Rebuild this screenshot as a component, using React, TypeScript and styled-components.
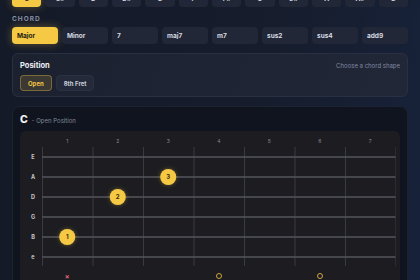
import React from "react";
import styled, { createGlobalStyle } from "styled-components";

const Global = createGlobalStyle`
  html, body { margin: 0; padding: 0; background: #151b29; }
  body { font-family: "Inter", "Noto Sans", sans-serif; overflow: hidden; }
  * { box-sizing: border-box; }
`;

const Page = styled.div`
  width: 420px;
  height: 280px;
  overflow: hidden;
  padding: 0 12px;
  background: linear-gradient(100deg, #141a28 0%, #161c2b 55%, #17223a 100%);
`;

const ButtonRow = styled.div<{ $cols: number; $top?: number }>`
  display: grid;
  grid-template-columns: repeat(${(p) => p.$cols}, 1fr);
  gap: 4px;
  margin-top: ${(p) => p.$top ?? 0}px;
`;

const ChoiceButton = styled.button<{ $active?: boolean; $align?: string }>`
  height: 17px;
  border: none;
  border-radius: 4px;
  padding: 0 5px;
  text-align: ${(p) => p.$align ?? "left"};
  font-family: "Inter", sans-serif;
  font-size: 6.5px;
  font-weight: 700;
  color: ${(p) => (p.$active ? "#1c1a12" : "#d5d9e2")};
  background: ${(p) => (p.$active ? "#f6c945" : "#212736")};
  box-shadow: ${(p) => (p.$active ? "0 0 8px rgba(246,201,69,0.35)" : "none")};
`;

const SectionLabel = styled.div`
  margin-top: 8px;
  margin-bottom: 4px;
  font-size: 6.5px;
  line-height: 8px;
  font-weight: 700;
  letter-spacing: 1px;
  color: #8790a3;
`;

const Panel = styled.div`
  margin-top: 9px;
  border: 1px solid #283042;
  border-radius: 6px;
  padding: 7px 7px 5px;
  background: linear-gradient(110deg, #1c2130 0%, #212737 100%);
`;

const PanelHead = styled.div`
  display: flex;
  justify-content: space-between;
  align-items: center;
  height: 8px;
`;

const PanelTitle = styled.span`
  font-size: 7.5px;
  font-weight: 700;
  color: #eef0f4;
`;

const PanelHint = styled.span`
  font-size: 6px;
  color: #8089a0;
`;

const PosRow = styled.div`
  display: flex;
  gap: 4px;
  margin-top: 6px;
`;

const PosButton = styled.button<{ $active?: boolean }>`
  height: 16px;
  padding: 0 7px;
  border-radius: 4px;
  font-family: "Inter", sans-serif;
  font-size: 6px;
  font-weight: 700;
  border: 1px solid ${(p) => (p.$active ? "rgba(246,201,69,0.35)" : "#2a3142")};
  background: ${(p) => (p.$active ? "rgba(246,201,69,0.14)" : "#242a39")};
  color: ${(p) => (p.$active ? "#f3c645" : "#c9ced9")};
`;

const Card = styled.div`
  margin-top: 9px;
  border: 1px solid #1c2231;
  border-radius: 8px;
  padding: 7px 7px 0;
  background: #10141e;
  height: 200px;
`;

const CardHead = styled.div`
  display: flex;
  align-items: baseline;
  gap: 4px;
  height: 12px;
  line-height: 12px;
`;

const ChordName = styled.span`
  font-size: 10.5px;
  font-weight: 800;
  color: #f3f4f7;
`;

const ChordSub = styled.span`
  font-size: 6px;
  color: #7f889b;
`;

const Fretboard = styled.div`
  margin-top: 5px;
  border-radius: 6px;
  background: #1d1d21;
  padding-left: 4px;
  height: 160px;
`;

const FretNumbers = styled.div`
  display: grid;
  grid-template-columns: 18px repeat(7, 50.5px);
  align-items: center;
  height: 16px;
  padding-top: 4px;
`;

const FretNum = styled.span`
  text-align: center;
  font-size: 5px;
  color: #8a8a92;
`;

const Body = styled.div`
  display: flex;
`;

const StringLabels = styled.div`
  display: flex;
  flex-direction: column;
  width: 18px;
`;

const StringLabel = styled.span`
  height: 20px;
  display: flex;
  align-items: center;
  justify-content: center;
  font-size: 5.5px;
  font-weight: 700;
  color: #c9c9cf;
`;

const Markers = styled.div`
  display: grid;
  grid-template-columns: 18px repeat(6, 50.5px);
  align-items: center;
  height: 18px;
`;

const Marker = styled.span`
  display: flex;
  justify-content: center;
  align-items: center;
`;

const Muted = styled.span`
  font-size: 7px;
  line-height: 7px;
  font-weight: 700;
  color: #e2677a;
`;

const Open = styled.span`
  width: 6px;
  height: 6px;
  border-radius: 50%;
  border: 1px solid #cfa53c;
`;

const roots = ["C", "C#", "D", "D#", "E", "F", "F#", "G", "G#", "A", "A#", "B"];
const chords = ["Major", "Minor", "7", "maj7", "m7", "sus2", "sus4", "add9"];
const strings = ["E", "A", "D", "G", "B", "e"];
const FW = 50.5;
const dots = [
  { fret: 3, s: 1, n: 3 },
  { fret: 2, s: 2, n: 2 },
  { fret: 1, s: 4, n: 1 },
];
const marks: ("x" | "o" | "")[] = ["x", "", "", "o", "", "o"];

function Board() {
  const w = FW * 7;
  return (
    <svg width={354} height={119} viewBox="0 0 354 119">
      <defs>
        <filter id="glow" x="-50%" y="-50%" width="200%" height="200%">
          <feGaussianBlur stdDeviation="2" result="b" />
          <feMerge>
            <feMergeNode in="b" />
            <feMergeNode in="SourceGraphic" />
          </feMerge>
        </filter>
      </defs>
      {Array.from({ length: 8 }).map((_, i) => (
        <line key={"f" + i} x1={i * FW + 0.5} x2={i * FW + 0.5} y1={0} y2={119} stroke="#3a3a41" strokeWidth={1} />
      ))}
      {strings.map((_, i) => (
        <line key={"s" + i} x1={0} x2={w} y1={10 + i * 20} y2={10 + i * 20} stroke="#55555c" strokeWidth={1.5} />
      ))}
      {dots.map((d) => {
        const cx = (d.fret - 0.5) * FW;
        const cy = 10 + d.s * 20;
        return (
          <g key={d.n}>
            <circle cx={cx} cy={cy} r={8} fill="#f6c945" opacity={0.35} filter="url(#glow)" />
            <circle cx={cx} cy={cy} r={8} fill="#f6c945" />
            <text x={cx} y={cy + 2} textAnchor="middle" fontSize="6" fontWeight="700" fill="#3a2f0e" fontFamily="Inter, sans-serif">
              {d.n}
            </text>
          </g>
        );
      })}
    </svg>
  );
}

export default function App() {
  return (
    <>
      <Global />
      <Page>
        <ButtonRow $cols={12} $top={-10}>
          {roots.map((r, i) => (
            <ChoiceButton key={r} $active={i === 0} $align="center">
              {r}
            </ChoiceButton>
          ))}
        </ButtonRow>
        <SectionLabel>CHORD</SectionLabel>
        <ButtonRow $cols={8}>
          {chords.map((c, i) => (
            <ChoiceButton key={c} $active={i === 0}>
              {c}
            </ChoiceButton>
          ))}
        </ButtonRow>
        <Panel>
          <PanelHead>
            <PanelTitle>Position</PanelTitle>
            <PanelHint>Choose a chord shape</PanelHint>
          </PanelHead>
          <PosRow>
            <PosButton $active>Open</PosButton>
            <PosButton>8th Fret</PosButton>
          </PosRow>
        </Panel>
        <Card>
          <CardHead>
            <ChordName>C</ChordName>
            <ChordSub>- Open Position</ChordSub>
          </CardHead>
          <Fretboard>
            <FretNumbers>
              <span />
              {[1, 2, 3, 4, 5, 6, 7].map((n) => (
                <FretNum key={n}>{n}</FretNum>
              ))}
            </FretNumbers>
            <Body>
              <StringLabels>
                {strings.map((s) => (
                  <StringLabel key={s}>{s}</StringLabel>
                ))}
              </StringLabels>
              <Board />
            </Body>
            <Markers>
              <span />
              {marks.map((m, i) => (
                <Marker key={i}>{m === "x" ? <Muted>×</Muted> : m === "o" ? <Open /> : null}</Marker>
              ))}
            </Markers>
          </Fretboard>
        </Card>
      </Page>
    </>
  );
}
